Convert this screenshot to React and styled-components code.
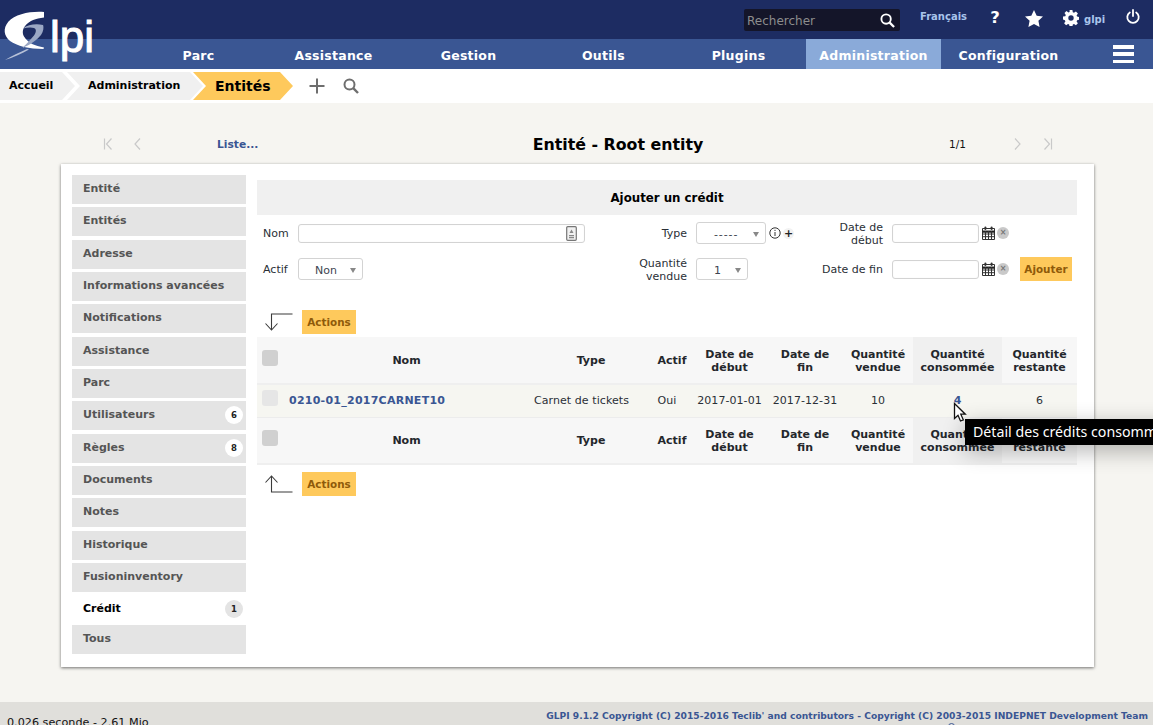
import React from "react";
import styled, { createGlobalStyle } from "styled-components";

const Global = createGlobalStyle`
  html, body { margin: 0; padding: 0; height: 725px; overflow: hidden; background: #f6f5f1; }
  body { font-family: "DejaVu Sans", Verdana, sans-serif; font-size: 11px; color: #24292f; }
  * { box-sizing: border-box; }
`;

const Page = styled.div`
  position: relative; width: 1153px; height: 725px; overflow: hidden;
  display: flex; flex-direction: column; background: #f6f5f1;
`;
const TopBar = styled.header`
  height: 39px; background: #1d2c62; display: flex; align-items: flex-start; padding-left: 744px; flex: none;
`;
const LogoWrap = styled.div`
  position: absolute; left: 0; top: 0; width: 100px; height: 68px; pointer-events: none;
`;
const LogoText = styled.span`
  position: absolute; left: 50px; top: 8px; font-family: "Liberation Sans", sans-serif; font-size: 44px; line-height: 58px;
  color: #fff; font-weight: 400; -webkit-text-stroke: 1px #fff;
`;
const SearchBox = styled.div`
  width: 156px; height: 22px; margin-top: 9px; background: #141529; border-radius: 2px; display: flex; align-items: center;
  justify-content: space-between; padding: 1px 5px 0 3px; color: #8d8d8d; font-size: 12px; flex: none;
`;
const Lang = styled.span`
  margin: 10px 0 0 20px; width: 47px; font-weight: 700; font-size: 10px; line-height: 13px; color: #a9c5ec; white-space: nowrap;
`;
const TopIcon = styled.span`
  display: flex; align-items: center; justify-content: center; flex: none;
  width: ${p => p.$w}px; margin-top: ${p => p.$t}px; margin-left: ${p => p.$l}px; color: #fff;
`;
const HelpMark = styled(TopIcon)`
  font-weight: 700; font-size: 16.5px; line-height: 20px;
`;
const UserName = styled.span`
  font-weight: 700; font-size: 10px; line-height: 13px; color: #a9c5ec; margin: 13px 0 0 5px; width: 21px; flex: none;
`;
const Nav = styled.nav`
  height: 30px; background: #3a5693; display: flex; padding-left: 131px; position: relative; flex: none;
`;
const NavItem = styled.a`
  width: 135px; flex: none; text-align: center; color: #fff; font-weight: 700; font-size: 12.5px; line-height: 33px; letter-spacing: .25px;
  background: ${p => (p.$active ? "#8aaad9" : "transparent")};
`;
const Burger = styled.span`
  margin: 6px 0 0 37px; width: 21px; height: 18px; display: flex; flex-direction: column; justify-content: space-between;
  & > i { display: block; height: 3.5px; background: #fff; }
`;
const CrumbBar = styled.div`
  height: 34px; background: #fff; display: flex; align-items: center; flex: none;
`;
const Crumb = styled.a`
  height: 28px; flex: none; display: flex; align-items: center; background: #f0f0f0; color: #000; font-weight: 700; font-size: 11px; padding-bottom: 1px;
  width: ${p => p.$w}px; margin-left: ${p => p.$ml}px; padding-left: ${p => p.$pl}px;
  clip-path: polygon(0 0, calc(100% - 13px) 0, 100% 50%, calc(100% - 13px) 100%, 0 100%, ${p => (p.$notch ? "13px 50%" : "0 50%")});
`;
const CrumbActive = styled(Crumb)`
  background: #fec95c; font-size: 14px;
`;
const CrumbIcon = styled.span`
  display: flex; flex: none; margin: -1px 0 0 ${p => p.$l}px; color: #6e6e6e;
`;
const Pager = styled.div`
  height: 61px; display: grid; grid-template-columns: 30px 83px 204px 396px 196px 31px 20px; padding-left: 103px; align-items: center; flex: none; padding-top: 20px;
`;
const PagerIcon = styled.span`
  display: flex; color: #c9c9c9;
`;
const ListLink = styled.a`
  color: #3a5693; font-weight: 700; font-size: 10.7px; padding: 1px 0 0 1px;
`;
const PageTitle = styled.h1`
  margin: 0; padding-top: 1px; font-size: 15.8px; font-weight: 700; color: #000; text-align: center; white-space: nowrap;
`;
const PageCount = styled.span`
  font-size: 10.5px; padding-left: 133px; color: #111;
`;
const Card = styled.main`
  margin-left: 61px; width: 1033px; height: 503px; background: #fff; flex: none; box-shadow: 0 1px 3px rgba(0,0,0,.55);
  display: flex; padding: 11px 17px 0 11px;
`;
const TabList = styled.ul`
  list-style: none; margin: 0; padding: 0; width: 174px; flex: none; display: flex; flex-direction: column; gap: 3.33px;
`;
const Tab = styled.li`
  height: ${p => (p.$active ? "26px" : "29px")}; background: ${p => (p.$active ? "#fff" : "#e4e4e4")}; color: ${p => (p.$active ? "#000" : "#555")};
  font-weight: 700; font-size: 11px; padding: 7px 3px 0 11px; line-height: 14px; display: flex; justify-content: space-between;
`;
const Badge = styled.span`
  width: 18px; height: 18px; border-radius: 50%; background: ${p => (p.$active ? "#e4e4e4" : "#fff")}; color: #222; font-size: 8.5px; font-weight: 700;
  display: flex; align-items: center; justify-content: center; margin-top: -2px; flex: none;
`;
const Content = styled.section`
  margin-left: 11px; width: 820px; padding-top: 5px; flex: none;
`;
const FormTitle = styled.div`
  height: 35px; background: #f0f0f0; display: flex; align-items: center; justify-content: center; font-weight: 700; color: #000; font-size: 11.8px;
`;
const FormGrid = styled.div`
  display: grid; grid-template-columns: 41px 332px 66px 114px 82px 128px 57px; grid-auto-rows: 36px; align-items: center;
`;
const Label = styled.label`
  font-size: 11px; line-height: 13px; color: #2a2f36; white-space: nowrap;
  text-align: ${p => (p.$left ? "left" : "right")}; padding: ${p => (p.$two ? "2px" : "0")} ${p => (p.$left ? "0" : "9px")} 0 ${p => (p.$left ? "6px" : "0")};
`;
const Input = styled.div`
  height: 19px; width: ${p => p.$w}px; border: 1px solid #d3d3d3; border-radius: 3px; background: #fff; display: flex; align-items: center;
  justify-content: flex-end; padding-right: 7px; box-shadow: inset 0 0 2px rgba(0,0,0,.04);
`;
const SelectBox = styled.div`
  height: 22px; width: ${p => p.$w}px; border: 1px solid #d3d3d3; border-radius: 3px; background: #fff; display: flex; align-items: center; color: #3d4450; font-size: 11px;
  padding: 2px 0 0 ${p => p.$pad}px; position: relative; letter-spacing: ${p => p.$ls || 0}px;
  &::after { content: ""; position: absolute; right: 6px; top: 9px; border: 3.5px solid transparent; border-top: 5px solid #888; border-bottom: 0; }
`;
const Cell = styled.div`
  display: flex; align-items: center; gap: ${p => p.$gap || 0}px; padding-left: ${p => p.$pl || 0}px;
`;
const Plus = styled.span`
  width: 11px; height: 11px; border-radius: 50%; background: #f2f2f2; font-size: 11px; font-weight: 700; color: #222; margin-left: 2px; line-height: 11px; text-align: center;
`;
const ClearDot = styled.span`
  width: 12px; height: 12px; border-radius: 50%; background: #c9c9c9; color: #777; font-size: 8px; line-height: 12px; text-align: center; font-weight: 700;
`;
const Button = styled.button`
  width: ${p => p.$w}px; height: 24px; padding: 0; border: 0; background: #fec95c; color: #8f5a0a; font: 700 10.4px "DejaVu Sans", sans-serif; flex: none;
`;
const ActionsRow = styled.div`
  display: flex; align-items: center; gap: 9px; padding-left: 7px; margin: ${p => p.$m};
`;
const Table = styled.table`
  border-collapse: collapse; table-layout: fixed; width: 820px; font-size: 11px;
`;
const Th = styled.th`
  background: ${p => (p.$sorted ? "#f0f0f0" : "#f7f7f7")}; height: 47px; padding: 1px 1px 0; font-weight: 700; font-size: 11px; line-height: 13px; color: #24272c; text-align: center;
  border-bottom: 2px solid #efefef;
`;
const Td = styled.td`
  background: #f6f6f1; height: 33px; padding: 0 ${p => p.$shift || 0}px 0 0; text-align: center; color: #2a2f36; white-space: nowrap; border-bottom: 1px solid #ececec; letter-spacing: .07px;
`;
const TdName = styled(Td)`
  text-align: left; font-weight: 700; color: #3a5693; padding-left: 6px; letter-spacing: .25px;
`;
const Check = styled.span`
  display: block; width: 16px; height: 16px; border-radius: 3px; background: ${p => (p.$light ? "#e6e6e6" : "#d0d0d0")}; margin: ${p => (p.$light ? "-5px 0 0 5px" : "-5px 0 0 4px")};
`;
const QtyLink = styled.a`
  color: #3a5693; font-weight: 700;
`;
const Tooltip = styled.div`
  position: absolute; left: 965px; top: 419px; width: 240px; height: 26px; background: #000; color: #fff; white-space: nowrap;
  font-family: "Noto Sans", "Open Sans", sans-serif; font-size: 14.2px; line-height: 26px; padding-left: 8px; box-shadow: 0 6px 22px rgba(0,0,0,.3);
`;
const Cursor = styled.svg`
  position: absolute; left: 953px; top: 402px;
`;
const Spacer = styled.div`
  height: 35px; flex: none;
`;
const Footer = styled.footer`
  height: 23px; background: #e0dfdb; flex: none; display: flex; justify-content: space-between; padding: 8px 5px 0 7px; overflow: hidden; position: relative;
`;
const Timing = styled.span`
  font-size: 11.2px; line-height: 14px; margin-top: 6px; color: #111; white-space: nowrap;
`;
const Copy = styled.a`
  font-size: 9.17px; font-weight: 700; color: #3a5693; line-height: 12px; white-space: nowrap;
`;
const FooterDot = styled.span`
  position: absolute; left: 948px; top: 21px; width: 7px; height: 7px; border: 1px solid #3a5693; border-radius: 50%;
`;
const IconSlot = styled.span`
  display: flex; margin-left: ${p => p.$l || 0}px;
`;

const chev = (d, w = 10) => (
  <svg width={w} height="14" viewBox="0 0 10 14" fill="none" stroke="currentColor" strokeWidth="1.2">
    <path d={d} />
  </svg>
);
const Calendar = () => (
  <svg width="13" height="14" viewBox="0 0 13 14">
    <path d="M0.5 2.5h12v11h-12z" fill="#fff" stroke="#333" />
    <path d="M0 5h13v1.2H0zM3.5 5v8M6.5 5v8M9.5 5v8M0.5 8h12M0.5 10.7h12" stroke="#333" strokeWidth="1" />
    <rect x="2.4" y="0.5" width="2" height="3.5" rx="1" fill="#333" />
    <rect x="8.6" y="0.5" width="2" height="3.5" rx="1" fill="#333" />
  </svg>
);
const ArrowDown = () => (
  <svg width="29" height="18" viewBox="0 0 29 18" fill="none" stroke="#3b3b3b" strokeWidth="1.1">
    <path d="M28.5 1H7.5V17M1.5 10.5 7.500 17 13.500 10.500" />
  </svg>
);
const ArrowUp = () => (
  <svg width="29" height="18" viewBox="0 0 29 18" fill="none" stroke="#3b3b3b" strokeWidth="1.1">
    <path d="M28.5 17H7.5V1M1.5 7.5 7.500 1 13.500 7.500" />
  </svg>
);

const tabs = [
  ["Entité"], ["Entités"], ["Adresse"], ["Informations avancées"], ["Notifications"], ["Assistance"], ["Parc"],
  ["Utilisateurs", 6], ["Règles", 8], ["Documents"], ["Notes"], ["Historique"], ["Fusioninventory"], ["Crédit", 1, true], ["Tous"],
];
const menu = ["Parc", "Assistance", "Gestion", "Outils", "Plugins", "Administration", "Configuration"];
const widths = [26, 247, 122, 40, 75, 76, 70, 89, 75];

const HeadRow = () => (
  <tr>
    <Th><Check /></Th>
    <Th>Nom</Th><Th>Type</Th><Th>Actif</Th><Th>Date de<br />début</Th><Th>Date de<br />fin</Th>
    <Th>Quantité<br />vendue</Th><Th $sorted>Quantité<br />consommée</Th><Th>Quantité<br />restante</Th>
  </tr>
);

export default function App() {
  return (
    <Page>
      <Global />
      <TopBar>
        <SearchBox>
          Rechercher
          <svg width="15" height="15" viewBox="0 0 16 16" fill="none" stroke="#fff" strokeWidth="2"><circle cx="6.500" cy="6.500" r="5" /><path d="M10.300 10.300 15 15" strokeWidth="2.400" /></svg>
        </SearchBox>
        <Lang>Français</Lang>
        <HelpMark $w={12} $l={22} $t={8}>?</HelpMark>
        <TopIcon $w={18} $l={24} $t={10}>
          <svg width="18" height="17" viewBox="0 0 18 17"><path d="M9 0l2.700 5.700 6.300.8-4.600 4.300 1.200 6.200L9 14l-5.600 3 1.200-6.200L0 6.500l6.300-.8z" fill="#fff" /></svg>
        </TopIcon>
        <TopIcon $w={16} $l={20} $t={10}>
          <svg width="16" height="16" viewBox="0 0 16 16"><path fill="#fff" fillRule="evenodd" d="M6.600 0h2.800l.4 2.300 1.200.5 1.900-1.300 2 2-1.300 1.900.5 1.200 2.300.4v2.800l-2.300.4-.5 1.200 1.300 1.900-2 2-1.900-1.300-1.200.5-.4 2.300H6.600l-.4-2.300-1.200-.5-1.900 1.300-2-2 1.300-1.900-.5-1.200L0 9.400V6.600l2.300-.4.5-1.200-1.300-1.900 2-2 1.900 1.300 1.200-.5zM8 5.300a2.700 2.700 0 1 0 0 5.400 2.700 2.700 0 0 0 0-5.400z" /></svg>
        </TopIcon>
        <UserName>glpi</UserName>
        <TopIcon $w={14} $l={21} $t={9}>
          <svg width="14" height="15" viewBox="0 0 14 15" fill="none" stroke="#fff" strokeWidth="1.800" strokeLinecap="round"><path d="M7 1v6M3.800 3.400a5.700 5.700 0 1 0 6.400 0" /></svg>
        </TopIcon>
      </TopBar>
      <Nav>
        {menu.map(m => <NavItem key={m} $active={m === "Administration"}>{m}</NavItem>)}
        <Burger><i /><i /><i /></Burger>
      </Nav>
      <LogoWrap>
        <svg width="50" height="62" viewBox="0 0 50 62" style={{ position: "absolute", left: 0, top: 0 }}>
          <path d="M44 12C31 11 15 14 8.500 21.500 2.500 28.500 4 36 10 41c7 5 19 8 33.500 8l.5-1.500C35 46 28 43 24 36.500 20 29 27 19 44 17.500z" fill="#fff" />
          <path d="M43 25c-7-1.500-15-.5-20 3.500 4-1 8-1.500 11-.5 2.500 1 2.500 4 0 7.500-3 3.500-7 8-12 12.500 8-3 15-8 19-13 2.500-3.500 3-7.500 2-10.500z" fill="#9aa7c4" />
          <path d="M5 60C12 56 19 52.500 27 49l2 .5C21 54 13 57.500 5 60z" fill="#b7c1d8" />
        </svg>
        <LogoText>lpi</LogoText>
      </LogoWrap>
      <CrumbBar>
        <Crumb $w={75} $ml={0} $pl={9}>Accueil</Crumb>
        <Crumb $notch $w={136} $ml={-8} $pl={21}>Administration</Crumb>
        <CrumbActive $notch $w={100} $ml={-10} $pl={22}>Entités</CrumbActive>
        <CrumbIcon $l={15}>
          <svg width="18" height="18" viewBox="0 0 18 18" fill="none" stroke="currentColor" strokeWidth="2"><path d="M9 1.500v15M1.500 9h15" /></svg>
        </CrumbIcon>
        <CrumbIcon $l={17}>
          <svg width="16" height="16" viewBox="0 0 16 16" fill="none" stroke="currentColor" strokeWidth="2"><circle cx="6.500" cy="6.500" r="5" /><path d="M10.200 10.200 15 15" strokeWidth="2.400" /></svg>
        </CrumbIcon>
      </CrumbBar>
      <Pager>
        <PagerIcon>{chev("M1.500 1.500v11M8.500 1.500 3.500 7l5 5.500")}</PagerIcon>
        <PagerIcon>{chev("M7 1.500 2 7l5 5.500")}</PagerIcon>
        <ListLink>Liste...</ListLink>
        <PageTitle>Entité - Root entity</PageTitle>
        <PageCount>1/1</PageCount>
        <PagerIcon>{chev("M3 1.500 8 7l-5 5.500")}</PagerIcon>
        <PagerIcon>{chev("M8.500 1.500v11M1.500 1.500 6.500 7l-5 5.500")}</PagerIcon>
      </Pager>
      <Card>
        <TabList>
          {tabs.map(([t, n, a]) => (
            <Tab key={t} $active={a}>{t}{n ? <Badge $active={a}>{n}</Badge> : null}</Tab>
          ))}
        </TabList>
        <Content>
          <FormTitle>Ajouter un crédit</FormTitle>
          <FormGrid>
            <Label $left>Nom</Label>
            <Cell>
              <Input $w={287}>
                <svg width="11" height="15" viewBox="0 0 11 15"><rect x="0.700" y="0.700" width="9.600" height="13.600" rx="1" fill="#f1f1f1" stroke="#777" strokeWidth="1.200" /><path d="M5.500 3.500 7.500 7h-4zM3 9h5v1.200H3zM3 11h5v1.200H3z" fill="#888" /></svg>
              </Input>
            </Cell>
            <Label>Type</Label>
            <Cell>
              <SelectBox $w={70} $pad={17} $ls={0.9}>-----</SelectBox>
              <IconSlot $l={3}>
                <svg width="12" height="12" viewBox="0 0 12 12" fill="none" stroke="#333"><circle cx="6" cy="6" r="5.200" /><path d="M6 5v4M6 2.800v1.200" /></svg>
              </IconSlot>
              <Plus>+</Plus>
            </Cell>
            <Label $two>Date de<br />début</Label>
            <Cell $gap={2}>
              <Input $w={87} />
              <IconSlot $l={1}><Calendar /></IconSlot>
              <ClearDot>×</ClearDot>
            </Cell>
            <span />
            <Label $left>Actif</Label>
            <Cell>
              <SelectBox $w={65} $pad={16}>Non</SelectBox>
            </Cell>
            <Label $two>Quantité<br />vendue</Label>
            <Cell>
              <SelectBox $w={52} $pad={17}>1</SelectBox>
            </Cell>
            <Label>Date de fin</Label>
            <Cell $gap={2}>
              <Input $w={87} />
              <IconSlot $l={1}><Calendar /></IconSlot>
              <ClearDot>×</ClearDot>
            </Cell>
            <Cell><Button $w={52}>Ajouter</Button></Cell>
          </FormGrid>
          <ActionsRow $m="23px 0 3px"><ArrowDown /><Button $w={54}>Actions</Button></ActionsRow>
          <Table>
            <colgroup>{widths.map((w, i) => <col key={i} style={{ width: w }} />)}</colgroup>
            <thead><HeadRow /></thead>
            <tbody>
              <tr>
                <Td><Check $light /></Td>
                <TdName>0210-01_2017CARNET10</TdName>
                <Td $shift={19}>Carnet de tickets</Td>
                <Td $shift={10}>Oui</Td>
                <Td>2017-01-01</Td>
                <Td>2017-12-31</Td>
                <Td>10</Td>
                <Td><QtyLink>4</QtyLink></Td>
                <Td>6</Td>
              </tr>
            </tbody>
            <tfoot><HeadRow /></tfoot>
          </Table>
          <ActionsRow $m="7px 0 0"><ArrowUp /><Button $w={54}>Actions</Button></ActionsRow>
        </Content>
      </Card>
      <Spacer />
      <Footer>
        <Timing>0.026 seconde - 2.61 Mio</Timing>
        <Copy>GLPI 9.1.2 Copyright (C) 2015-2016 Teclib' and contributors - Copyright (C) 2003-2015 INDEPNET Development Team</Copy>
        <FooterDot />
      </Footer>
      <Tooltip>Détail des crédits consommés</Tooltip>
      <Cursor width="14" height="21" viewBox="0 0 14 21">
        <path d="M1.500 1.500v15l3.500-3.200L7.500 19l2.800-1.200-2.500-5.600h4.500z" fill="#fff" stroke="#111" strokeWidth="1.300" />
      </Cursor>
    </Page>
  );
}
